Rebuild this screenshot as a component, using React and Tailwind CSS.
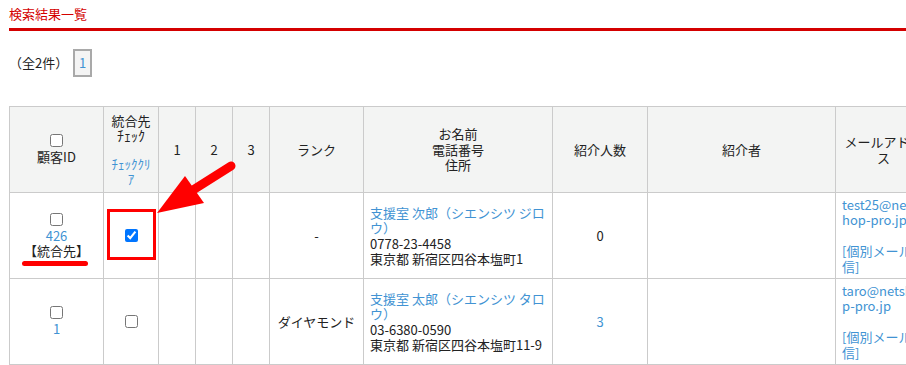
import React from "react";

const rows = [
  {
    id: "426",
    merged: true,
    checked: true,
    rank: "-",
    name: ["支援室 次郎（シエンシツ ジロ", "ウ）"],
    tel: "0778-23-4458",
    addr: "東京都 新宿区四谷本塩町1",
    count: "0",
    countLink: false,
    mail: ["test25@nets", "hop-pro.jp"],
  },
  {
    id: "1",
    merged: false,
    checked: false,
    rank: "ダイヤモンド",
    name: ["支援室 太郎（シエンシツ タロ", "ウ）"],
    tel: "03-6380-0590",
    addr: "東京都 新宿区四谷本塩町11-9",
    count: "3",
    countLink: true,
    mail: ["taro@netsho", "p-pro.jp"],
  },
];

const th = "border border-[#cbcbcb] bg-[#f3f4f3] text-center align-middle font-normal px-[6px]";
const td = "border border-[#cbcbcb] align-middle px-[6px]";

const App = () => {
  return (
    <div className="relative w-[906px] h-[365px] overflow-hidden bg-white text-[13px] leading-[15.5px] text-[#222] font-['Noto_Sans_CJK_JP','Liberation_Sans',sans-serif]">
      {/* heading */}
      <div className="pl-[9px]">
        <h2 className="pt-[6px] pb-[6px] leading-[16px] text-[#d40000] border-b-[3px] border-[#d40000]">
          検索結果一覧
        </h2>
      </div>

      {/* count + pager */}
      <div className="flex items-center pl-[9px] mt-[18px] gap-[5px]">
        <span>（全2件）</span>
        <span className="w-[19px] h-[28px] flex items-center justify-center border-2 border-[#a9a9a9] bg-[#f4f4f4] text-[#4193d3]">
          1
        </span>
      </div>

      {/* result table */}
      <div className="ml-[9px] mt-[29px]">
        <table className="table-fixed border-collapse w-[1043px]">
          <colgroup>
            <col className="w-[94px]" />
            <col className="w-[55px]" />
            <col className="w-[37px]" />
            <col className="w-[37px]" />
            <col className="w-[37px]" />
            <col className="w-[94px]" />
            <col className="w-[189px]" />
            <col className="w-[95px]" />
            <col className="w-[188px]" />
            <col className="w-[96px]" />
            <col className="w-[120px]" />
          </colgroup>
          <thead>
            <tr className="h-[86px]">
              <th className={th}>
                <input type="checkbox" className="block mx-auto mb-[2px]" />
                <div>顧客ID</div>
              </th>
              <th className={th + " !px-[4px]"}>
                <div>統合先</div>
                <div className="text-[14px]">ﾁｪｯｸ</div>
                <div className="mt-[12px] text-[#4193d3] whitespace-nowrap">
                  ﾁｪｯｸｸﾘ
                  <br />ｱ
                </div>
              </th>
              <th className={th}>1</th>
              <th className={th}>2</th>
              <th className={th}>3</th>
              <th className={th}>ランク</th>
              <th className={th}>
                お名前
                <br />
                電話番号
                <br />
                住所
              </th>
              <th className={th}>紹介人数</th>
              <th className={th}>紹介者</th>
              <th className={th + " whitespace-nowrap"}>
                メールアドレ
                <br />ス
              </th>
              <th className={th}></th>
            </tr>
          </thead>
          <tbody>
            {rows.map((r) => (
              <tr key={r.id} className="h-[86px]">
                <td className={td + " relative text-center"}>
                  <input type="checkbox" className="block mx-auto mb-[2px]" />
                  <div className="text-[#4193d3]">{r.id}</div>
                  {r.merged && (
                    <>
                      <div>【統合先】</div>
                      <span className="absolute left-[12px] top-[68px] w-[66px] h-[5px] rounded-full bg-[#ff0000]" />
                    </>
                  )}
                </td>
                <td className={td + " relative text-center"}>
                  <input
                    type="checkbox"
                    defaultChecked={r.checked}
                    className="block mx-auto"
                  />
                  {r.checked && (
                    <span className="absolute left-[3px] top-[16px] w-[49px] h-[51px] border-[3px] border-[#ff0000]" />
                  )}
                </td>
                <td className={td}></td>
                <td className={td}></td>
                <td className={td}></td>
                <td className={td + " text-center whitespace-nowrap"}>{r.rank}</td>
                <td className={td + " whitespace-nowrap"}>
                  <div className="text-[#4193d3]">
                    {r.name[0]}
                    <br />
                    {r.name[1]}
                  </div>
                  <div>{r.tel}</div>
                  <div>{r.addr}</div>
                </td>
                <td className={td + " text-center " + (r.countLink ? "text-[#4193d3]" : "")}>
                  {r.count}
                </td>
                <td className={td}></td>
                <td className={td + " whitespace-nowrap text-[#4193d3]"}>
                  <div>
                    {r.mail[0]}
                    <br />
                    {r.mail[1]}
                  </div>
                  <div className="mt-[15.5px]">
                    [個別メール送
                    <br />
                    信]
                  </div>
                </td>
                <td className={td}></td>
              </tr>
            ))}
          </tbody>
        </table>
      </div>

      {/* annotation arrow */}
      <svg
        className="absolute left-0 top-0 pointer-events-none"
        width="906"
        height="365"
        viewBox="0 0 906 365"
      >
        <line x1="231" y1="166" x2="193" y2="190" stroke="#ff0000" strokeWidth="9" strokeLinecap="round" />
        <polygon points="157,213 185,176 204,203" fill="#ff0000" />
      </svg>
    </div>
  );
};

export default App;
